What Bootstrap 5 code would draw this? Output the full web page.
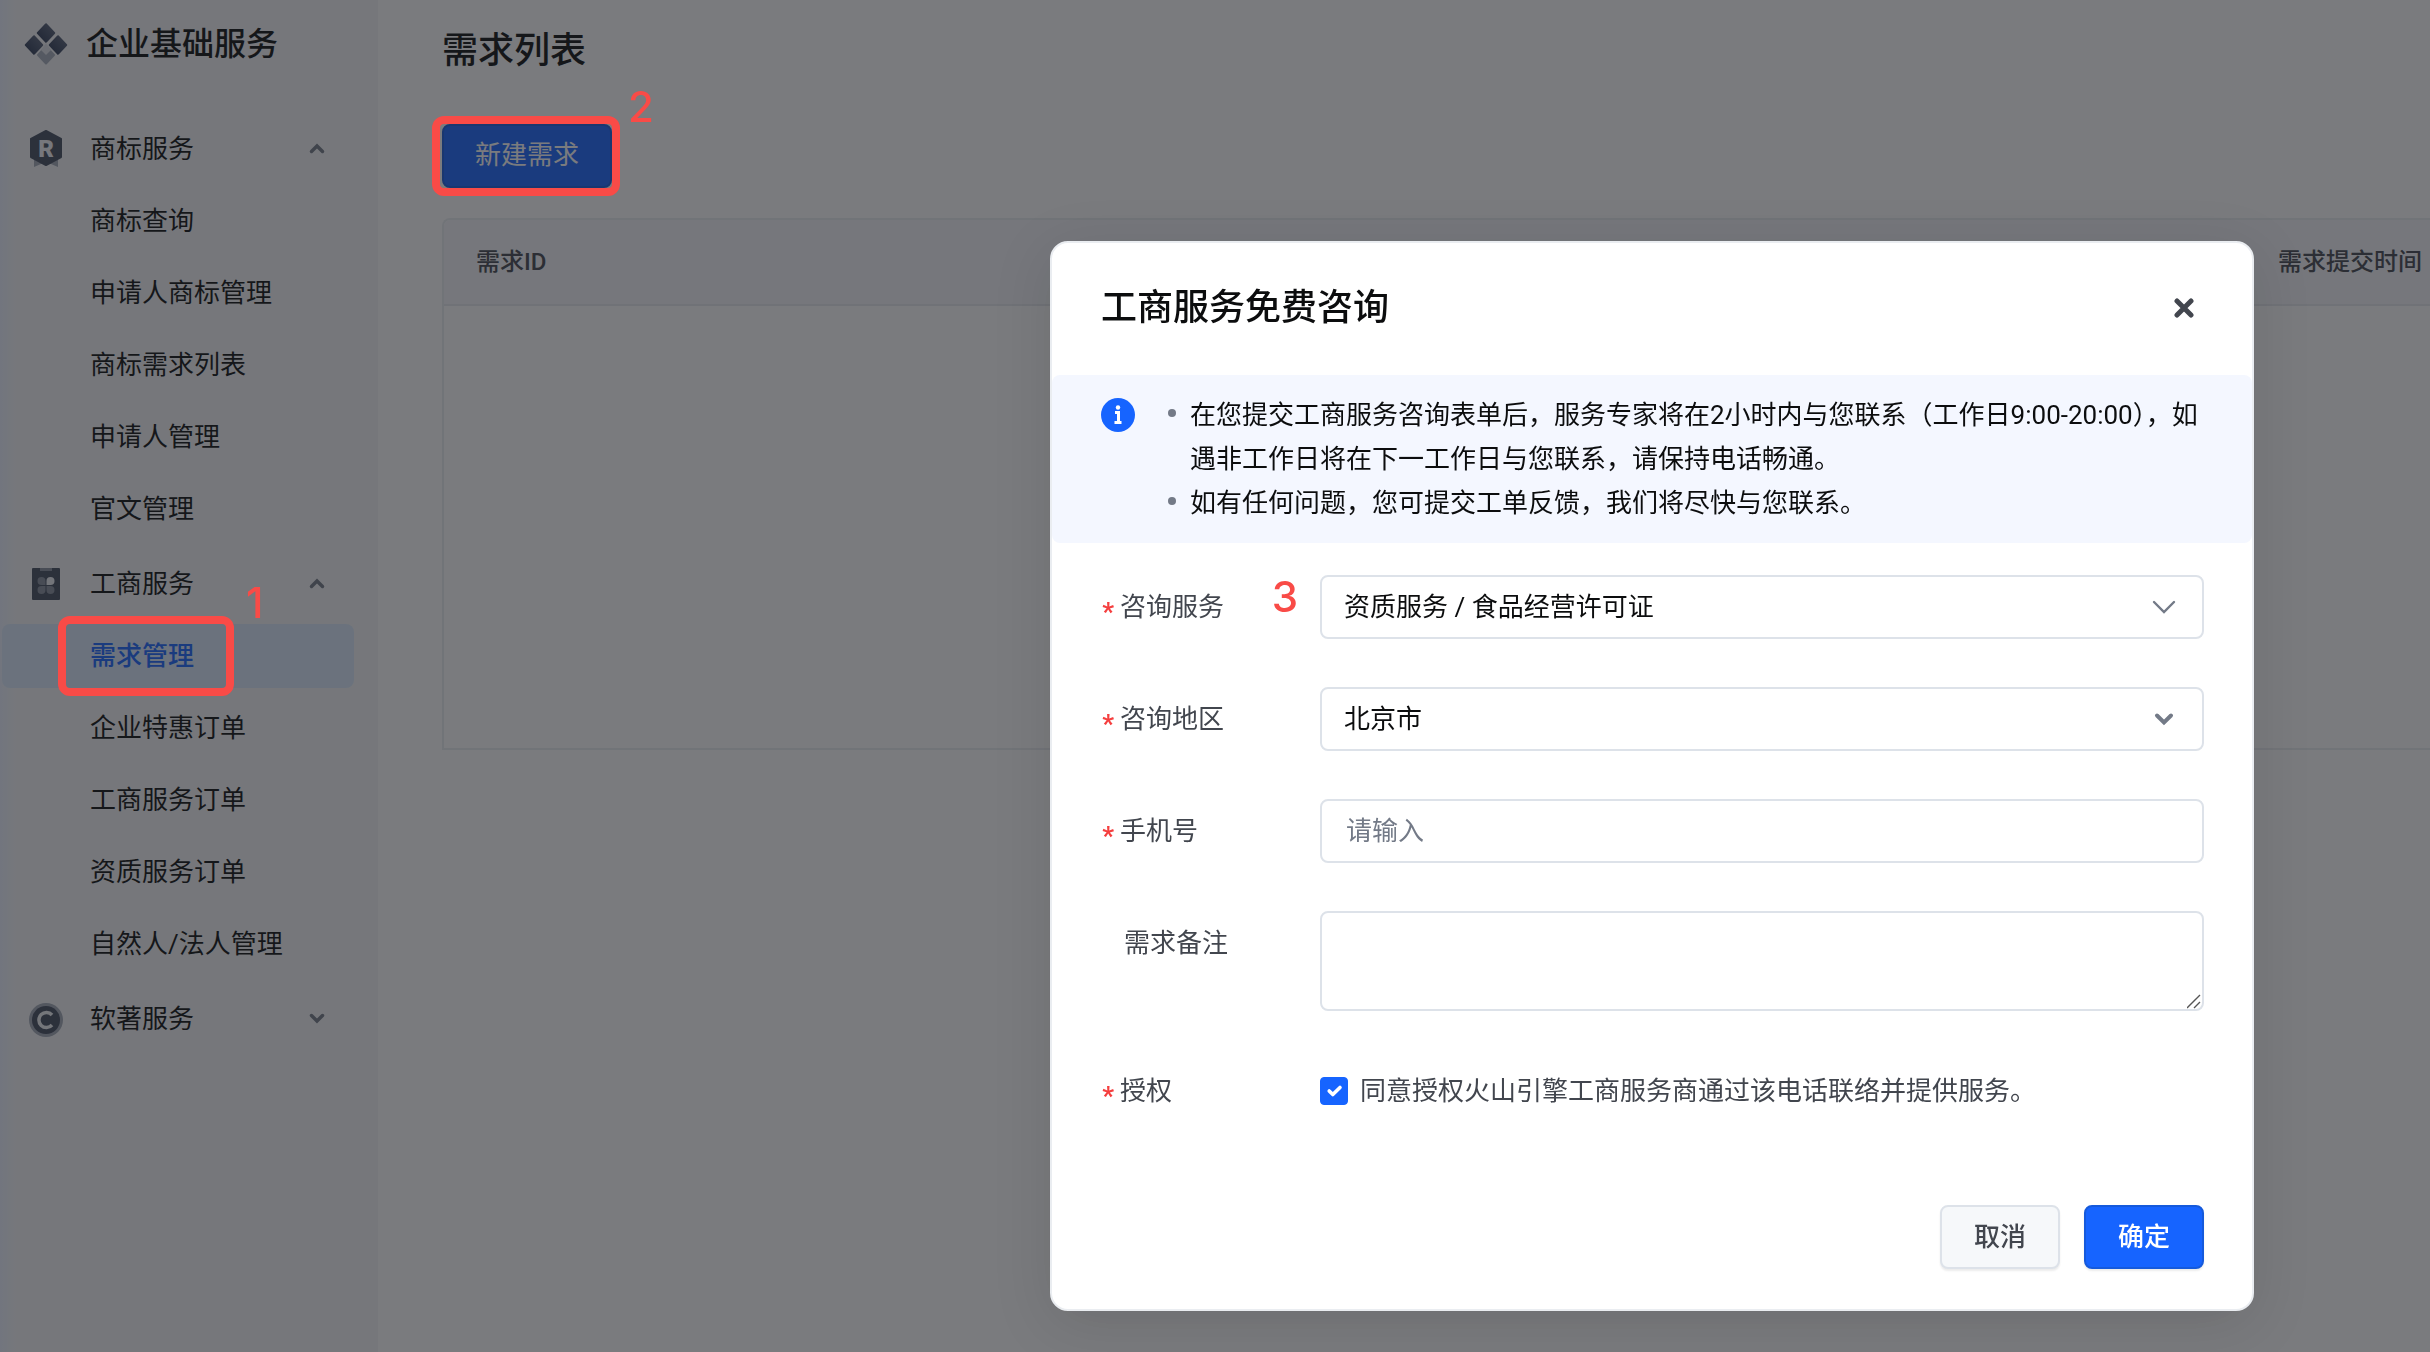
<!DOCTYPE html>
<html lang="zh-CN">
<head>
<meta charset="utf-8">
<meta name="viewport" content="width=device-width, initial-scale=1">
<title>企业基础服务 - 需求列表</title>
<link href="https://cdn.jsdelivr.net/npm/bootstrap@5.3.0/dist/css/bootstrap.min.css" rel="stylesheet">
<style>
  body { font-family: Roboto, "Noto Sans CJK SC", sans-serif; font-size: 26px; line-height: 44px; color: #0c0d0e; background: #fff; overflow: hidden; }
  button, input, select, textarea { font-family: inherit; }

  /* sidebar */
  .side-bar { width: 378px; background: linear-gradient(90deg, #ebf1ff 0, #f5f6f8 16px); }
  .brand-row { height: 88px; padding-left: 24px; gap: 18px; font-size: 32px; font-weight: 500; }
  .side-nav { padding: 29px 24px 0 2px; gap: 11px; }
  .side-group { gap: 8px; }
  .side-head, .side-link { height: 64px; width: 100%; border: 0; border-radius: 8px; background: none; color: #0c0d0e; text-decoration: none; }
  .side-head { padding: 0 29px 0 26px; gap: 26px; }
  .side-head .head-icon { width: 36px; height: 40px; }
  .side-link { padding-left: 88px; }
  .side-link.active { background: #daeafc; color: #1664ff; font-weight: 500; }

  /* main column */
  .main-col { padding-left: 64px; min-width: 0; }
  .page-title { font-size: 36px; font-weight: 500; line-height: 54px; height: 100px; margin: 0; }
  .btn-new { width: 170px; height: 64px; padding: 0; font-size: 26px; line-height: 40px; padding-bottom: 2px; border-radius: 8px; background: #1664ff; border: 2px solid #155adc; color: #fff; }
  .list-frame { margin-top: 30px; min-height: 532px; border: 2px solid #eaedf1; border-right: 0; border-radius: 8px 0 0 0; overflow: hidden; }
  .list-frame th { height: 85px; padding: 0 32px; background: #f5f6f9; color: #42464e; font-size: 24px; font-weight: 500; border-bottom: 2px solid #e6e9ee; vertical-align: middle; white-space: nowrap; }
  .list-frame .time-col { width: 184px; padding-right: 0; }

  /* mask and dialog */
  .page-mask { position: fixed; inset: 0; z-index: 1040; background: rgba(29, 31, 36, .59); }
  .dialog-layer { position: fixed; inset: 0; z-index: 1050; padding: 241px 176px 0 0; }
  .dialog-box { width: 1204px; border: 2px solid #eaedf1; border-radius: 18px; box-shadow: 0 12px 60px rgba(0, 0, 0, .12); background: #fff; }
  .dialog-head { height: 132px; padding: 0 48px 2px 49px; }
  .dialog-head h2 { font-size: 36px; font-weight: 500; line-height: 50px; margin: 0; }
  .close-x { width: 40px; height: 40px; border: 0; background: none; padding: 0; }
  .tip-bar { background: #f4f7ff; border-radius: 8px; padding: 18px 48px 18px 49px; gap: 33px; }
  .tip-bar svg { margin-top: 5px; }
  .tip-bar ul { list-style: none; margin: 0; padding: 0; }
  .tip-bar li { display: flex; gap: 14px; }
  .tip-bar li::before { content: ""; flex: none; width: 8px; height: 8px; margin-top: 16px; border-radius: 50%; background: #737a87; }
  .form-area { padding: 32px 48px 0; gap: 48px; }
  .field-label { width: 220px; height: 64px; color: #42464e; line-height: 64px; gap: 6px; }
  .req-mark { width: 14px; color: #f53f3f; padding-top: 5px; font-weight: 700; text-align: right; }
  .field-box, .field-box:focus { height: 64px; padding: 0 24px 0 22px; font-size: 26px; line-height: 44px; color: #0c0d0e; border: 2px solid #dde2e9; border-radius: 8px; background-color: #fff; box-shadow: none; }
  input.field-box { padding-left: 24px; }
  .field-box::placeholder { color: #737a87; }
  textarea.field-box { height: 100px; }
  textarea.field-box::-webkit-resizer { background: url("data:image/svg+xml,%3Csvg xmlns='http://www.w3.org/2000/svg' width='15' height='15'%3E%3Cpath d='M0 14L13 1M7 14L13 8' stroke='%23555' stroke-width='1.4'/%3E%3C/svg%3E") no-repeat; }
  select.field-box { background-repeat: no-repeat; background-position: right 26px center; background-size: 24px 24px; }
  .chev-thin { background-image: url("data:image/svg+xml,%3Csvg xmlns='http://www.w3.org/2000/svg' viewBox='0 0 24 24'%3E%3Cpath d='M2 7l10 10L22 7' fill='none' stroke='%23737a87' stroke-width='2.4' stroke-linecap='round'/%3E%3C/svg%3E"); }
  .chev-bold { background-image: url("data:image/svg+xml,%3Csvg xmlns='http://www.w3.org/2000/svg' viewBox='0 0 24 24'%3E%3Cpath d='M5 8.500l7 7 7-7' fill='none' stroke='%23737a87' stroke-width='4' stroke-linecap='round'/%3E%3C/svg%3E"); }
  .agree-row { height: 64px; gap: 12px; color: #42464e; }
  .agree-row .form-check-input { width: 28px; height: 28px; margin: 0; border-radius: 4px; }
  .agree-row .form-check-input:checked { border-color: #1664ff; background-color: #1664ff; background-size: 24px; }
  .dialog-foot { padding: 82px 48px 40px; gap: 24px; }
  .foot-btn { width: 120px; height: 64px; padding: 0; font-size: 26px; font-weight: 500; border-width: 2px; border-radius: 8px; box-shadow: 0 2px 2px rgba(0, 0, 0, .08); }
  .foot-cancel { background: #f6f8fa; border-color: #dde2e9; color: #42464e; }
  .foot-ok { background: #1664ff; border-color: #155adc; color: #fff; }

  /* step marks drawn over the page */
  .step-frame { position: absolute; z-index: 1060; border: 8px solid #f94b47; border-radius: 12px; pointer-events: none; }
  .step-num { position: absolute; z-index: 1060; color: #f94b47; font-family: Inter, sans-serif; font-size: 42px; font-weight: 500; line-height: 44px; }
  .frame-menu { inset: -18px -40px -18px -32px; }
  .num-menu { left: 156px; top: -53px; }
  .frame-new { inset: -8px -8px -8px -10px; }
  .num-new { left: 186px; top: -39px; }
  .num-field { right: 22px; top: 0; }
</style>
</head>
<body>
<div class="d-flex min-vh-100">
  <aside class="side-bar flex-shrink-0">
    <div class="brand-row d-flex align-items-center">
      <svg width="44" height="44" viewBox="0 0 44 44" aria-hidden="true">
        <defs>
          <linearGradient id="lg" x1="1" y1="0" x2="0" y2="1"><stop offset="0" stop-color="#5c667c"/><stop offset="1" stop-color="#26334f"/></linearGradient>
        </defs>
        <path d="M22 24.500l8 8.500-8 8.500-8-8.500z" fill="#a6adba" stroke="#a6adba" stroke-width="2" stroke-linejoin="round"/>
        <path d="M22 21l5 7-5 5-5-5z" fill="#dfe3ea"/>
        <g fill="url(#lg)" stroke="url(#lg)" stroke-width="2.500" stroke-linejoin="round">
          <path d="M22 2.500l8 8.500-8 8.500-8-8.500z"/>
          <path d="M10 14.500l8 8.500-8 8.500-8-8.500z"/>
          <path d="M34 14.500l8 8.500-8 8.500-8-8.500z"/>
        </g>
      </svg>
      <span>企业基础服务</span>
    </div>
    <nav class="side-nav d-flex flex-column">
      <div class="side-group d-flex flex-column">
        <button type="button" class="side-head d-flex align-items-center">
          <svg class="head-icon" viewBox="0 0 36 40" aria-hidden="true">
            <path d="M6 28h24v10l-7-3h-10l-7 3z" fill="#a0a7b5"/>
            <path d="M18 2l15 8v18l-15 8-15-8V10z" fill="#424b5e" stroke="#424b5e" stroke-width="2" stroke-linejoin="round"/>
            <text x="18" y="28" text-anchor="middle" font-family="Roboto" font-weight="900" font-size="24" fill="#f4f5f9">R</text>
          </svg>
          <span class="me-auto">商标服务</span>
          <svg width="16" height="16" viewBox="0 0 16 16" fill="none" stroke="#737a87" stroke-width="3.500" stroke-linecap="round" aria-hidden="true"><path d="M2.500 10.500L8 5l5.500 5.500"/></svg>
        </button>
        <a href="#" class="side-link d-flex align-items-center">商标查询</a>
        <a href="#" class="side-link d-flex align-items-center">申请人商标管理</a>
        <a href="#" class="side-link d-flex align-items-center">商标需求列表</a>
        <a href="#" class="side-link d-flex align-items-center">申请人管理</a>
        <a href="#" class="side-link d-flex align-items-center">官文管理</a>
      </div>
      <div class="side-group d-flex flex-column">
        <button type="button" class="side-head d-flex align-items-center">
          <svg class="head-icon" viewBox="0 0 36 40" aria-hidden="true">
            <rect x="4" y="4" width="28" height="32" rx="1" fill="#424b5e"/>
            <path d="M12 4h12v3H12z" fill="#858d9b"/>
            <path d="M17.500 21v-4a4 4 0 1 0-4 4zM17.500 22h-4a4 4 0 1 0 4 4zM18.500 22v4a4 4 0 1 0 4-4z" fill="#858d9b"/>
            <path d="M18.500 21v-4a4 4 0 1 1 4 4z" fill="#eef0f5"/>
          </svg>
          <span class="me-auto">工商服务</span>
          <svg width="16" height="16" viewBox="0 0 16 16" fill="none" stroke="#737a87" stroke-width="3.500" stroke-linecap="round" aria-hidden="true"><path d="M2.500 10.500L8 5l5.500 5.500"/></svg>
        </button>
        <a href="#" class="side-link active d-flex align-items-center"><span class="position-relative">需求管理<span class="step-frame frame-menu"></span><span class="step-num num-menu">1</span></span></a>
        <a href="#" class="side-link d-flex align-items-center">企业特惠订单</a>
        <a href="#" class="side-link d-flex align-items-center">工商服务订单</a>
        <a href="#" class="side-link d-flex align-items-center">资质服务订单</a>
        <a href="#" class="side-link d-flex align-items-center">自然人/法人管理</a>
      </div>
      <div class="side-group d-flex flex-column">
        <button type="button" class="side-head d-flex align-items-center">
          <svg class="head-icon" viewBox="0 0 36 40" aria-hidden="true">
            <circle cx="18" cy="21" r="17" fill="#a0a7b5"/>
            <circle cx="18" cy="21" r="14" fill="#424b5e"/>
            <path d="M24 16a7.500 7.500 0 1 0 0 10" fill="none" stroke="#f0f2f6" stroke-width="3.500"/>
          </svg>
          <span class="me-auto">软著服务</span>
          <svg width="16" height="16" viewBox="0 0 16 16" fill="none" stroke="#737a87" stroke-width="3.500" stroke-linecap="round" aria-hidden="true"><path d="M2.500 4.500L8 10l5.500-5.500"/></svg>
        </button>
      </div>
    </nav>
  </aside>

  <main class="main-col flex-grow-1 pt-4">
    <h1 class="page-title">需求列表</h1>
    <div class="d-inline-flex position-relative align-top">
      <button type="button" class="btn btn-new">新建需求</button>
      <span class="step-frame frame-new"></span>
      <span class="step-num num-new">2</span>
    </div>
    <div class="list-frame">
      <table class="w-100">
        <thead><tr><th scope="col">需求ID</th><th scope="col" class="time-col">需求提交时间</th></tr></thead>
      </table>
    </div>
  </main>
</div>

<div class="page-mask"></div>
<div class="dialog-layer d-flex justify-content-end align-items-start">
  <form class="dialog-box" role="dialog" aria-labelledby="dlgTitle">
    <div class="dialog-head d-flex align-items-center justify-content-between">
      <h2 id="dlgTitle">工商服务免费咨询</h2>
      <button type="button" class="close-x d-flex align-items-center justify-content-center" aria-label="关闭">
        <svg width="20" height="20" viewBox="0 0 20 20" stroke="#42464e" stroke-width="5" stroke-linecap="round" aria-hidden="true"><path d="M3 3l14 14M17 3L3 17"/></svg>
      </button>
    </div>
    <div class="tip-bar d-flex align-items-start">
      <svg class="flex-shrink-0" width="34" height="34" viewBox="0 0 34 34" aria-hidden="true">
        <circle cx="17" cy="17" r="17" fill="#1664ff"/>
        <circle cx="17" cy="9.500" r="2.200" fill="#fff"/>
        <path d="M14 14.500h3.500V24M13.500 24.500h7" fill="none" stroke="#fff" stroke-width="3"/>
      </svg>
      <ul>
        <li><span>在您提交工商服务咨询表单后，服务专家将在2小时内与您联系（工作日9:00-20:00），如遇非工作日将在下一工作日与您联系，请保持电话畅通。</span></li>
        <li><span>如有任何问题，您可提交工单反馈，我们将尽快与您联系。</span></li>
      </ul>
    </div>
    <div class="form-area d-flex flex-column">
      <div class="d-flex">
        <div class="position-relative flex-shrink-0">
          <label class="field-label d-flex" for="service"><span class="req-mark">*</span>咨询服务</label>
          <span class="step-num num-field">3</span>
        </div>
        <select id="service" class="form-select field-box chev-thin"><option>资质服务 / 食品经营许可证</option></select>
      </div>
      <div class="d-flex">
        <label class="field-label d-flex flex-shrink-0" for="region"><span class="req-mark">*</span>咨询地区</label>
        <select id="region" class="form-select field-box chev-bold"><option>北京市</option></select>
      </div>
      <div class="d-flex">
        <label class="field-label d-flex flex-shrink-0" for="phone"><span class="req-mark">*</span>手机号</label>
        <input id="phone" type="tel" class="form-control field-box" placeholder="请输入">
      </div>
      <div class="d-flex">
        <label class="field-label d-flex flex-shrink-0 ps-4" for="note">需求备注</label>
        <textarea id="note" class="form-control field-box"></textarea>
      </div>
      <div class="d-flex">
        <label class="field-label d-flex flex-shrink-0" for="agree"><span class="req-mark">*</span>授权</label>
        <div class="agree-row d-flex align-items-center">
          <input id="agree" type="checkbox" class="form-check-input" checked>
          <label for="agree">同意授权火山引擎工商服务商通过该电话联络并提供服务。</label>
        </div>
      </div>
    </div>
    <div class="dialog-foot d-flex justify-content-end">
      <button type="button" class="btn foot-btn foot-cancel">取消</button>
      <button type="submit" class="btn foot-btn foot-ok">确定</button>
    </div>
  </form>
</div>
<script src="https://cdn.jsdelivr.net/npm/bootstrap@5.3.0/dist/js/bootstrap.bundle.min.js"></script>
</body>
</html>
